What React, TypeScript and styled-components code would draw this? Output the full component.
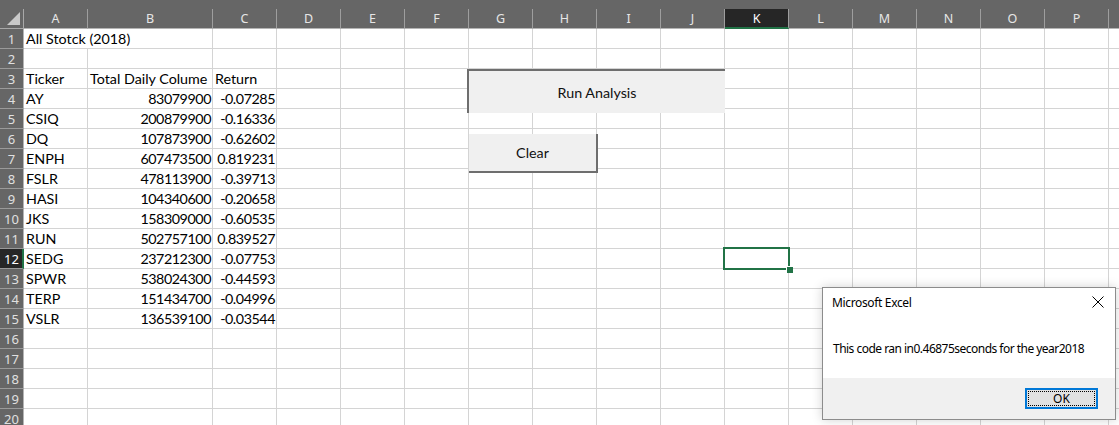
import React from "react";
import styled, { createGlobalStyle } from "styled-components";

const GlobalStyle = createGlobalStyle`
  html, body { margin: 0; padding: 0; background: #ffffff; overflow: hidden; }
  #root { width: 1119px; height: 425px; overflow: hidden; }
`;

const HEADER_BG = "#666666";
const HEADER_DARK = "#262626";
const GREEN = "#217346";
const GRID = "#d4d4d4";

type Col = { label: string; width: number };
const COLS: Col[] = [
  { label: "A", width: 64 },
  { label: "B", width: 125 },
  { label: "C", width: 64 },
  ...["D", "E", "F", "G", "H", "I", "J", "K", "L", "M", "N", "O", "P"].map(
    (l) => ({ label: l, width: 64 })
  ),
  { label: "", width: 64 },
];

const SELECTED_COL = "K";
const SELECTED_ROW = 12;

type CellData = { v: string; num?: boolean; span?: number };
const DATA: [string, string, string][] = [
  ["AY", "83079900", "-0.07285"],
  ["CSIQ", "200879900", "-0.16336"],
  ["DQ", "107873900", "-0.62602"],
  ["ENPH", "607473500", "0.819231"],
  ["FSLR", "478113900", "-0.39713"],
  ["HASI", "104340600", "-0.20658"],
  ["JKS", "158309000", "-0.60535"],
  ["RUN", "502757100", "0.839527"],
  ["SEDG", "237212300", "-0.07753"],
  ["SPWR", "538024300", "-0.44593"],
  ["TERP", "151434700", "-0.04996"],
  ["VSLR", "136539100", "-0.03544"],
];

function rowCells(r: number): CellData[] {
  if (r === 1) return [{ v: "All Stotck (2018)", span: 2 }];
  if (r === 3) return [{ v: "Ticker" }, { v: "Total Daily Colume" }, { v: "Return" }];
  if (r >= 4 && r <= 15) {
    const d = DATA[r - 4];
    return [{ v: d[0] }, { v: d[1], num: true }, { v: d[2], num: true }];
  }
  return [];
}

const Page = styled.div`
  position: relative;
  width: 1119px;
  height: 425px;
  overflow: hidden;
`;

const Sheet = styled.div<{ $cols: string }>`
  display: grid;
  grid-template-columns: ${(p) => p.$cols};
  grid-template-rows: 29px;
  grid-auto-rows: 20px;
  font-family: "Lato", "Liberation Sans", sans-serif;
`;

const Corner = styled.div`
  background: ${HEADER_BG};
  display: flex;
  flex-direction: column;
  justify-content: flex-end;
`;

const CornerInner = styled.div`
  height: 20px;
  border-right: 1px solid #a8a8a8;
  border-bottom: 1px solid #a8a8a8;
  display: flex;
  align-items: flex-end;
  justify-content: flex-end;
  padding: 0 3px 3px 0;
  box-sizing: border-box;
`;

const CornerTriangle = styled.div`
  width: 0;
  height: 0;
  border-left: 13px solid transparent;
  border-bottom: 13px solid #c9c9c9;
`;

const ColHeader = styled.div`
  background: ${HEADER_BG};
  display: flex;
  flex-direction: column;
  justify-content: flex-end;
  overflow: hidden;
`;

const ColLabel = styled.div<{ $selected?: boolean }>`
  height: 20px;
  box-sizing: border-box;
  background: ${(p) => (p.$selected ? HEADER_DARK : HEADER_BG)};
  border-right: 1px solid #9e9e9e;
  border-bottom: ${(p) => (p.$selected ? `2px solid ${GREEN}` : "1px solid #b4b4b4")};
  color: ${(p) => (p.$selected ? "#ffffff" : "#e6e6e6")};
  font-family: "Noto Sans", "Open Sans", sans-serif;
  font-size: 12.5px;
  display: flex;
  align-items: center;
  justify-content: center;
  padding-top: ${(p) => (p.$selected ? "1px" : "0")};
`;

const RowHeader = styled.div<{ $selected?: boolean }>`
  background: ${(p) => (p.$selected ? HEADER_DARK : HEADER_BG)};
  box-sizing: border-box;
  border-right: ${(p) => (p.$selected ? `2px solid ${GREEN}` : "1px solid #b4b4b4")};
  border-bottom: 1px solid #9a9a9a;
  color: ${(p) => (p.$selected ? "#ffffff" : "#e0e0e0")};
  font-family: "Noto Sans", "Open Sans", sans-serif;
  font-size: 13px;
  display: flex;
  align-items: center;
  justify-content: center;
  padding-left: ${(p) => (p.$selected ? "1px" : "0")};
`;

const Cell = styled.div<{ $num?: boolean; $span?: number }>`
  grid-column: span ${(p) => p.$span ?? 1};
  box-sizing: border-box;
  border-right: 1px solid ${GRID};
  border-bottom: 1px solid ${GRID};
  font-size: 14.3px;
  color: #000000;
  white-space: nowrap;
  overflow: hidden;
  display: flex;
  align-items: flex-end;
  justify-content: ${(p) => (p.$num ? "flex-end" : "flex-start")};
  padding: ${(p) => (p.$num ? "0 1px 0 2px" : "0 2px 0 2px")};
  line-height: 18px;
  min-width: 0;
`;

const CellText = styled.span<{ $num?: boolean }>`
  letter-spacing: ${(p) => (p.$num ? "-0.45px" : "0")};
`;

const Selection = styled.div`
  position: absolute;
  left: 723px;
  top: 247px;
  width: 67px;
  height: 23px;
  box-sizing: border-box;
  border: 2px solid ${GREEN};
  pointer-events: none;
`;

const FillHandle = styled.div`
  position: absolute;
  right: -5px;
  bottom: -5px;
  width: 6px;
  height: 6px;
  background: ${GREEN};
  border-left: 1px solid #ffffff;
  border-top: 1px solid #ffffff;
`;

const SheetButton = styled.div<{ $pressed?: boolean }>`
  position: absolute;
  box-sizing: border-box;
  background: #f0f0f0;
  font-family: "Lato", "Liberation Sans", sans-serif;
  font-size: 14.3px;
  color: #111111;
  display: flex;
  align-items: center;
  justify-content: center;
  ${(p) =>
    p.$pressed
      ? `border-top: 2px solid #6e6e6e; border-left: 2px solid #6e6e6e;`
      : `border-right: 2px solid #6e6e6e; border-bottom: 2px solid #6e6e6e;`}
`;

const Dialog = styled.div`
  position: absolute;
  left: 822px;
  top: 287px;
  width: 294px;
  height: 133px;
  box-sizing: border-box;
  background: #ffffff;
  border: 1px solid #8c8c8c;
  box-shadow: 0 0 10px rgba(0, 0, 0, 0.18);
  display: flex;
  flex-direction: column;
  font-family: "Noto Sans", "Open Sans", sans-serif;
  font-size: 12px;
  color: #000000;
`;

const TitleBar = styled.div`
  height: 31px;
  display: flex;
  align-items: center;
  justify-content: space-between;
  padding: 0 9px 0 9px;
`;

const Title = styled.div`
  letter-spacing: -0.35px;
  padding-bottom: 2px;
`;

const CloseIcon = styled.svg`
  width: 12px;
  height: 12px;
  margin-bottom: 3px;
  margin-right: 2px;
`;

const Message = styled.div`
  flex: 1;
  display: flex;
  align-items: center;
  padding: 0 0 0 10px;
  letter-spacing: -0.52px;
`;

const Footer = styled.div`
  height: 41px;
  box-sizing: border-box;
  background: #f0f0f0;
  display: flex;
  align-items: flex-start;
  justify-content: flex-end;
  padding: 10px 17px 0 0;
`;

const OkButton = styled.div`
  width: 73px;
  height: 21px;
  box-sizing: border-box;
  border: 2px solid #0078d7;
  background: #e1e1e1;
  padding: 1px;
  display: flex;
`;

const OkFocus = styled.div`
  flex: 1;
  border: 1px dotted #000000;
  display: flex;
  align-items: center;
  justify-content: center;
  font-size: 12px;
`;

export default function App() {
  const template = ["24px", ...COLS.map((c) => `${c.width}px`)].join(" ");
  const rows = Array.from({ length: 20 }, (_, i) => i + 1);
  return (
    <Page>
      <GlobalStyle />
      <Sheet $cols={template}>
        <Corner>
          <CornerInner>
            <CornerTriangle />
          </CornerInner>
        </Corner>
        {COLS.map((c, i) => (
          <ColHeader key={`h${i}`}>
            <ColLabel $selected={c.label === SELECTED_COL}>{c.label}</ColLabel>
          </ColHeader>
        ))}
        {rows.map((r) => {
          const cells = rowCells(r);
          const out: React.ReactNode[] = [];
          let ci = 0;
          let di = 0;
          while (ci < COLS.length) {
            const d = cells[di];
            const span = d?.span ?? 1;
            out.push(
              <Cell key={`${r}-${ci}`} $num={d?.num} $span={span}>
                {d ? <CellText $num={d.num}>{d.v}</CellText> : null}
              </Cell>
            );
            ci += span;
            di += 1;
          }
          return (
            <React.Fragment key={r}>
              <RowHeader $selected={r === SELECTED_ROW}>{r}</RowHeader>
              {out}
            </React.Fragment>
          );
        })}
      </Sheet>

      <SheetButton $pressed style={{ left: 467, top: 69, width: 258, height: 44 }}>
        Run Analysis
      </SheetButton>
      <SheetButton style={{ left: 469, top: 134, width: 129, height: 39 }}>Clear</SheetButton>

      <Selection>
        <FillHandle />
      </Selection>

      <Dialog>
        <TitleBar>
          <Title>Microsoft Excel</Title>
          <CloseIcon viewBox="0 0 12 12">
            <path d="M0.5 0.5 L11.5 11.5 M11.5 0.5 L0.5 11.5" stroke="#000" strokeWidth="1" fill="none" />
          </CloseIcon>
        </TitleBar>
        <Message>This code ran in0.46875seconds for the year2018</Message>
        <Footer>
          <OkButton>
            <OkFocus>OK</OkFocus>
          </OkButton>
        </Footer>
      </Dialog>
    </Page>
  );
}
